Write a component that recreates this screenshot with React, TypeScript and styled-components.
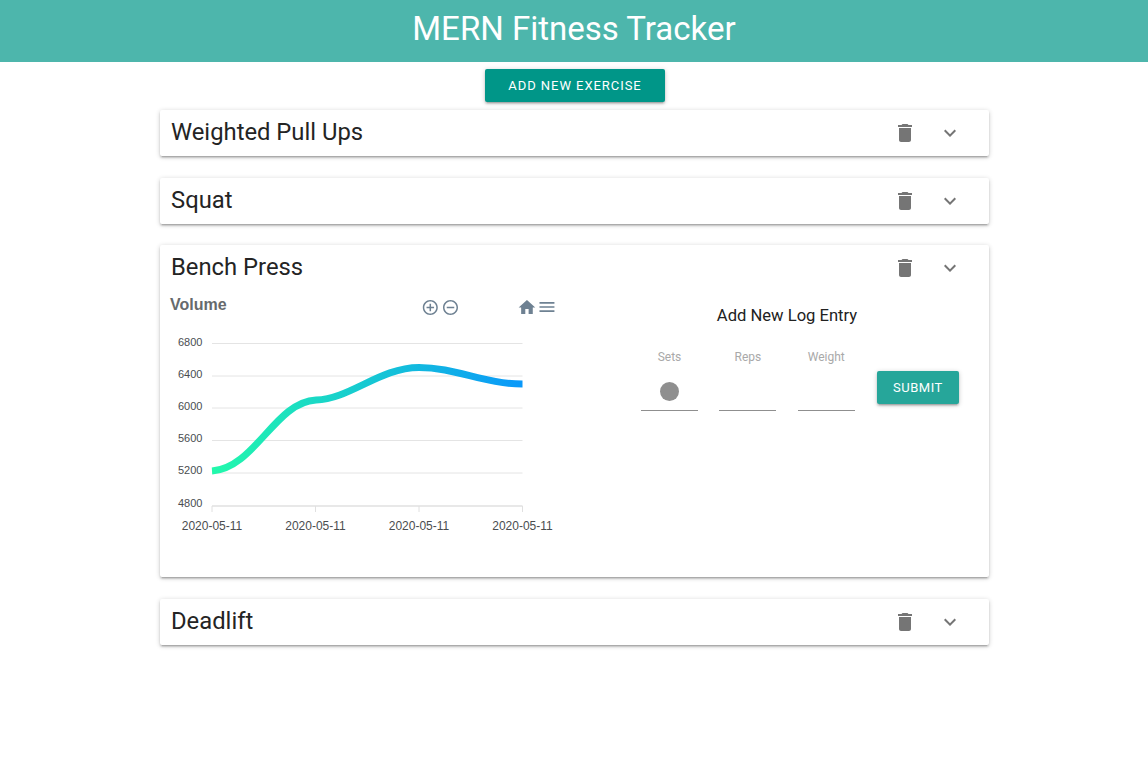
import React from "react";
import styled, { createGlobalStyle } from "styled-components";

const Global = createGlobalStyle`
  html, body { margin: 0; padding: 0; background: #fff; }
  body { font-family: Roboto, "Liberation Sans", sans-serif; color: #212121; }
`;

const Page = styled.div`
  min-height: 761px;
  display: flex;
  flex-direction: column;
`;

const Header = styled.header`
  height: 62px;
  background: #4db6ac;
  display: flex;
  align-items: flex-start;
  justify-content: center;
`;

const Title = styled.h1`
  margin: 0;
  color: #fff;
  font-size: 33px;
  font-weight: 400;
  line-height: 58px;
`;

const AddRow = styled.div`
  display: flex;
  justify-content: center;
  padding: 7px 0 8px 2px;
`;

const RaisedButton = styled.button<{ $bg: string; $w: number; $spacing: number }>`
  width: ${(p) => p.$w}px;
  height: 33px;
  padding: 0;
  border: 0;
  border-radius: 2px;
  background: ${(p) => p.$bg};
  color: #fff;
  font-family: Roboto, sans-serif;
  font-size: 13px;
  font-weight: 400;
  letter-spacing: ${(p) => p.$spacing}px;
  text-transform: uppercase;
  box-shadow: 0 2px 2px 0 rgba(0,0,0,.14), 0 3px 1px -2px rgba(0,0,0,.12), 0 1px 5px 0 rgba(0,0,0,.2);
`;

const List = styled.div`
  width: 829px;
  margin-left: 160px;
  display: flex;
  flex-direction: column;
  gap: 21.6px;
`;

const Card = styled.section`
  background: #fff;
  border-radius: 2px;
  box-shadow: 0 2px 2px 0 rgba(0,0,0,.14), 0 3px 1px -2px rgba(0,0,0,.12), 0 1px 5px 0 rgba(0,0,0,.2);
`;

const CardHead = styled.div`
  height: 46px;
  display: flex;
  align-items: flex-start;
  padding: 0 27px 0 11px;
`;

const CardTitle = styled.h2`
  flex: 1;
  margin: 0;
  font-size: 23.8px;
  font-weight: 400;
  line-height: 45px;
  color: #242424;
`;

const CardActions = styled.div`
  display: flex;
  gap: 21px;
  align-items: center;
  height: 46px;
`;

const Icon = styled.svg`
  width: 24px;
  height: 24px;
  display: block;
`;

const CardBody = styled.div`
  display: flex;
  height: 286px;
`;

const Chart = styled.svg`
  width: 410px;
  height: 250px;
  display: block;
  flex: none;
`;

const FormCol = styled.div`
  margin-left: 15px;
  width: 404px;
  display: flex;
  flex-direction: column;
`;

const FormTitle = styled.div`
  margin-top: 12.5px;
  font-size: 16.6px;
  line-height: 24px;
  text-align: center;
  color: #212121;
`;

const FormRow = styled.div`
  display: flex;
  margin-top: 22.5px;
  padding-left: 56px;
  gap: 21.4px;
  align-items: flex-start;
`;

const Field = styled.div`
  width: 57px;
  display: flex;
  flex-direction: column;
  align-items: center;
`;

const FieldLabel = styled.div`
  font-size: 12px;
  line-height: 14px;
  color: #a9a9a9;
`;

const FieldInput = styled.div`
  width: 100%;
  height: 47px;
  box-sizing: border-box;
  border-bottom: 1px solid #8f8f8f;
  display: flex;
  justify-content: center;
  padding-top: 18px;
`;

const Dot = styled.span`
  width: 19px;
  height: 19px;
  border-radius: 50%;
  background: #8f8f8f;
`;

const SubmitWrap = styled.div`
  margin-top: 21px;
  margin-left: 0.8px;
`;

const trash = "M6 19c0 1.1.9 2 2 2h8c1.1 0 2-.9 2-2V7H6v12zM19 4h-3.5l-1-1h-5l-1 1H5v2h14V4z";
const chevron = "M16.59 8.59L12 13.17 7.41 8.59 6 10l6 6 6-6z";

const Head = ({ name }: { name: string }) => (
  <CardHead>
    <CardTitle>{name}</CardTitle>
    <CardActions>
      <Icon viewBox="0 0 24 24"><path d={trash} fill="#757575" /></Icon>
      <Icon viewBox="0 0 24 24"><path d={chevron} fill="#757575" /></Icon>
    </CardActions>
  </CardHead>
);

const yLabels: [string, number, number][] = [
  ["6800", 343.5, 346],
  ["6400", 376, 378],
  ["6000", 408, 410],
  ["5600", 440.5, 442],
  ["5200", 473, 474],
];
const xs = [212, 315.5, 419, 522.5];

const VolumeChart = () => (
  <Chart viewBox="160 291 410 250">
    <defs>
      <linearGradient id="vol" gradientUnits="userSpaceOnUse" x1="212" y1="0" x2="522" y2="0">
        <stop offset="0" stopColor="#22f9ab" />
        <stop offset="1" stopColor="#0a98fa" />
      </linearGradient>
    </defs>
    <text x="170" y="310" fontFamily="Liberation Sans, sans-serif" fontSize="16" fontWeight="700" fill="#666a6d">Volume</text>
    <g fill="#6e8192">
      <g transform="translate(421.3 298.5) scale(.75)"><path d="M13 7h-2v4H7v2h4v4h2v-4h4v-2h-4V7zm-1-5C6.49 2 2 6.49 2 12s4.49 10 10 10 10-4.49 10-10S17.51 2 12 2zm0 18c-4.41 0-8-3.59-8-8s3.59-8 8-8 8 3.59 8 8-3.59 8-8 8z" /></g>
      <g transform="translate(441.5 298.5) scale(.75)"><path d="M7 11v2h10v-2H7zm5-9C6.48 2 2 6.48 2 12s4.48 10 10 10 10-4.48 10-10S17.52 2 12 2zm0 18c-4.41 0-8-3.59-8-8s3.59-8 8-8 8 3.59 8 8-3.59 8-8 8z" /></g>
      <g transform="translate(517 297.5) scale(.83)"><path d="M10 20v-6h4v6h5v-8h3L12 3 2 12h3v8z" /></g>
      <g transform="translate(537 297) scale(.83)"><path d="M3 18h18v-2H3v2zm0-5h18v-2H3v2zm0-7v2h18V6H3z" /></g>
    </g>
    {yLabels.map(([label, y, ty]) => (
      <g key={label}>
        <line x1="212" x2="522.5" y1={y} y2={y} stroke="#e4e4e4" />
        <text x="178" y={ty} fontFamily="Liberation Sans, sans-serif" fontSize="11" fill="#4a4d4f">{label}</text>
      </g>
    ))}
    <text x="178" y="507" fontFamily="Liberation Sans, sans-serif" fontSize="11" fill="#4a4d4f">4800</text>
    <line x1="212" x2="522.5" y1="506" y2="506" stroke="#e0e0e0" strokeWidth="1.5" />
    {xs.map((x, i) => (
      <g key={i}>
        <line x1={x} x2={x} y1="506" y2="512" stroke="#e0e0e0" />
        <text x={x} y="530" textAnchor="middle" fontFamily="Liberation Sans, sans-serif" fontSize="12" fill="#4a4d4f">2020-05-11</text>
      </g>
    ))}
    <path d="M212 471 C255 468 275 402 316 400 C350 399 380 367.5 419 367.5 C455 367.5 485 384 522.5 384" fill="none" stroke="url(#vol)" strokeWidth="7" />
  </Chart>
);

export default function App() {
  return (
    <Page>
      <Global />
      <Header><Title>MERN Fitness Tracker</Title></Header>
      <AddRow>
        <RaisedButton $bg="#009688" $w={180} $spacing={0.95}>Add New Exercise</RaisedButton>
      </AddRow>
      <List>
        <Card><Head name="Weighted Pull Ups" /></Card>
        <Card><Head name="Squat" /></Card>
        <Card>
          <Head name="Bench Press" />
          <CardBody>
            <VolumeChart />
            <FormCol>
              <FormTitle>Add New Log Entry</FormTitle>
              <FormRow>
                <Field><FieldLabel>Sets</FieldLabel><FieldInput><Dot /></FieldInput></Field>
                <Field><FieldLabel>Reps</FieldLabel><FieldInput /></Field>
                <Field><FieldLabel>Weight</FieldLabel><FieldInput /></Field>
                <SubmitWrap>
                  <RaisedButton $bg="#26a69a" $w={82} $spacing={0.5}>Submit</RaisedButton>
                </SubmitWrap>
              </FormRow>
            </FormCol>
          </CardBody>
        </Card>
        <Card><Head name="Deadlift" /></Card>
      </List>
    </Page>
  );
}
